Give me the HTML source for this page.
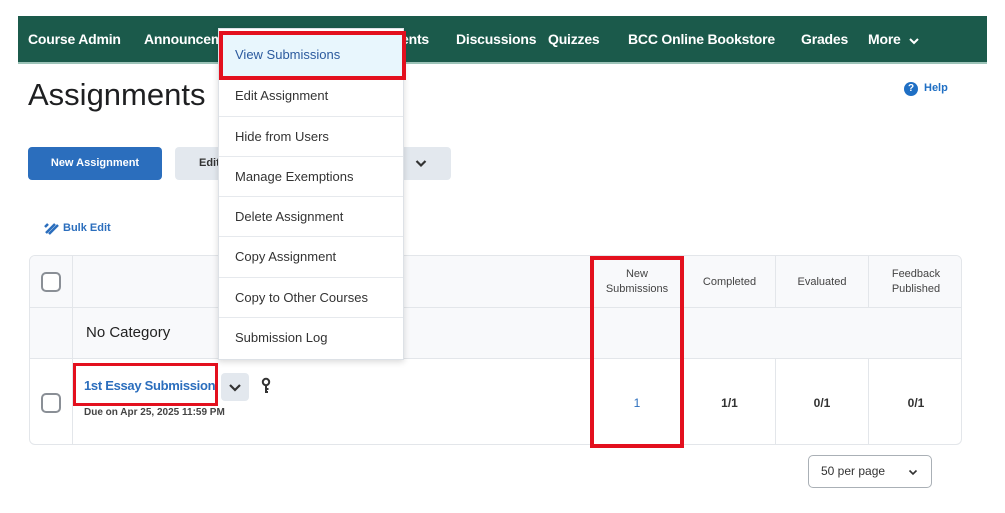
<!DOCTYPE html>
<html><head><style>
*{box-sizing:border-box;margin:0;padding:0}
body{width:1005px;height:513px;background:#fff;font-family:"Liberation Sans",sans-serif;position:relative;overflow:hidden;color:#202122}
.a{position:absolute}
.nav{left:18px;top:16px;width:969px;height:48px;background:#1b5a4b;border-bottom:2px solid #9cc3b8}
.nav span{position:absolute;top:15px;color:#fff;font-size:14px;font-weight:bold;white-space:nowrap;letter-spacing:-0.2px}
.cb{width:20px;height:20px;border:2px solid #8a8f96;border-radius:5px;background:#fff}
.menu{left:218px;top:28px;width:186px;height:332px;background:#fff;border:1px solid #dde1e6;box-shadow:0 2px 6px rgba(0,0,0,.15)}
.mi{position:absolute;left:0;width:184px;height:40px;border-top:1px solid #e6e9ed;font-size:13px;color:#333;padding-left:16px;line-height:40px}
.th{font-size:11px;color:#444;text-align:center;line-height:15px}
.vl{width:1px;background:#e3e6ea}
</style></head><body>
<div class="a nav">
<span style="left:10px">Course Admin</span>
<span style="left:126px">Announcements</span>
<span style="left:383px">ents</span>
<span style="left:438px">Discussions</span>
<span style="left:530px">Quizzes</span>
<span style="left:610px">BCC Online Bookstore</span>
<span style="left:783px">Grades</span>
<span style="left:850px">More</span>
<svg class="a" style="left:891px;top:21px" width="10" height="8" viewBox="0 0 10 8"><path d="M1 2l4 4 4-4" stroke="#fff" stroke-width="2" fill="none"/></svg>
</div>
<div class="a" style="left:28px;top:77px;font-size:31px;color:#1e1f21">Assignments</div>
<div class="a" style="left:904px;top:82px;width:14px;height:14px;border-radius:50%;background:#1f6fc4;color:#fff;font-size:10px;font-weight:bold;text-align:center;line-height:14px">?</div>
<div class="a" style="left:924px;top:82px;font-size:11px;font-weight:bold;color:#1f6fc4">Help</div>
<div class="a" style="left:28px;top:147px;width:134px;height:33px;background:#2b6ebd;border-radius:4px;color:#fff;font-size:11px;font-weight:bold;text-align:center;line-height:33px">New Assignment</div>
<div class="a" style="left:175px;top:147px;width:276px;height:33px;background:#e3e8ee;border-radius:4px;font-size:11px;font-weight:bold;color:#333"><span class="a" style="left:24px;top:10px">Edit</span>
<svg class="a" style="left:240px;top:12px" width="12" height="9" viewBox="0 0 12 9"><path d="M1.5 2l4.5 4.5 4.5-4.5" stroke="#333" stroke-width="2.2" fill="none"/></svg></div>
<svg class="a" style="left:44px;top:221px" width="16" height="14" viewBox="0 0 16 14"><path d="M2 12L11 3M5 13l9-9M1 6l3-3" stroke="#2b6ebd" stroke-width="2.5" fill="none"/></svg>
<div class="a" style="left:63px;top:222px;font-size:11px;font-weight:bold;color:#2b6ebd">Bulk Edit</div>
<!-- table -->
<div class="a" style="left:29px;top:255px;width:933px;height:190px;border:1px solid #e3e6ea;border-radius:6px;overflow:hidden">
<div class="a" style="left:0;top:0;width:933px;height:103px;background:#f8f9fb"></div>
<div class="a" style="left:0;top:51px;width:933px;height:1px;background:#e3e6ea"></div>
<div class="a" style="left:0;top:102px;width:933px;height:1px;background:#e3e6ea"></div>
<div class="a vl" style="left:42px;top:0;height:190px"></div>
<div class="a vl" style="left:560px;top:0;height:51px"></div>
<div class="a vl" style="left:653px;top:0;height:51px"></div>
<div class="a vl" style="left:745px;top:0;height:51px"></div>
<div class="a vl" style="left:838px;top:0;height:51px"></div>
<div class="a vl" style="left:653px;top:103px;height:87px"></div>
<div class="a vl" style="left:745px;top:103px;height:87px"></div>
<div class="a vl" style="left:838px;top:103px;height:87px"></div>
<div class="a cb" style="left:11px;top:16px"></div>
<div class="a cb" style="left:11px;top:137px"></div>
<div class="a" style="left:56px;top:68px;font-size:15px;color:#222">No Category</div>
<div class="a th" style="left:561px;top:11px;width:92px">New<br>Submissions</div>
<div class="a th" style="left:654px;top:19px;width:91px">Completed</div>
<div class="a th" style="left:746px;top:19px;width:92px">Evaluated</div>
<div class="a th" style="left:839px;top:11px;width:94px">Feedback<br>Published</div>
<div class="a" style="left:561px;top:140px;width:92px;text-align:center;font-size:12px;color:#2b6ebd">1</div>
<div class="a" style="left:654px;top:140px;width:91px;text-align:center;font-size:12px;font-weight:bold;color:#333">1/1</div>
<div class="a" style="left:746px;top:140px;width:92px;text-align:center;font-size:12px;font-weight:bold;color:#333">0/1</div>
<div class="a" style="left:839px;top:140px;width:94px;text-align:center;font-size:12px;font-weight:bold;color:#333">0/1</div>
<div class="a" style="left:54px;top:122px;font-size:13px;font-weight:bold;color:#2b6ebd;letter-spacing:-0.3px">1st Essay Submission</div>
<div class="a" style="left:191px;top:117px;width:28px;height:28px;background:#e3e8ee;border-radius:4px"></div>
<svg class="a" style="left:198px;top:127px" width="14" height="10" viewBox="0 0 14 10"><path d="M2 2l5 5 5-5" stroke="#333" stroke-width="2.2" fill="none"/></svg>
<svg class="a" style="left:231px;top:121px" width="10" height="18" viewBox="0 0 10 18"><circle cx="5" cy="5" r="3.2" stroke="#333" stroke-width="2" fill="none"/><path d="M5 8v8M5 12h2.5M5 15h2" stroke="#333" stroke-width="2" fill="none"/></svg>
<div class="a" style="left:54px;top:151px;font-size:10px;font-weight:bold;color:#444">Due on Apr 25, 2025 11:59 PM</div>
</div>
<div class="a" style="left:73px;top:363px;width:145px;height:43px;border:3px solid #e3101e"></div>
<div class="a" style="left:590px;top:256px;width:94px;height:192px;border:4px solid #e3101e"></div>
<div class="a" style="left:808px;top:455px;width:124px;height:33px;border:1px solid #aab0b6;border-radius:5px;font-size:12px;color:#333"><span class="a" style="left:12px;top:8px">50 per page</span>
<svg class="a" style="left:99px;top:13px" width="10" height="7" viewBox="0 0 10 7"><path d="M1.5 1.5l3.5 3.5 3.5-3.5" stroke="#333" stroke-width="1.6" fill="none"/></svg></div>
<!-- menu -->
<div class="a menu">
<div class="mi" style="top:5px;border-top:none;background:#e8f6fd;color:#2b5a9e;height:44px;line-height:42px">View Submissions</div>
<div class="mi" style="top:47px;border-top:none">Edit Assignment</div>
<div class="mi" style="top:87px">Hide from Users</div>
<div class="mi" style="top:127px">Manage Exemptions</div>
<div class="mi" style="top:167px">Delete Assignment</div>
<div class="mi" style="top:207px">Copy Assignment</div>
<div class="mi" style="top:248px">Copy to Other Courses</div>
<div class="mi" style="top:288px">Submission Log</div>
</div>
<div class="a" style="left:219px;top:31px;width:187px;height:49px;border:4px solid #e3101e"></div>
</body></html>
